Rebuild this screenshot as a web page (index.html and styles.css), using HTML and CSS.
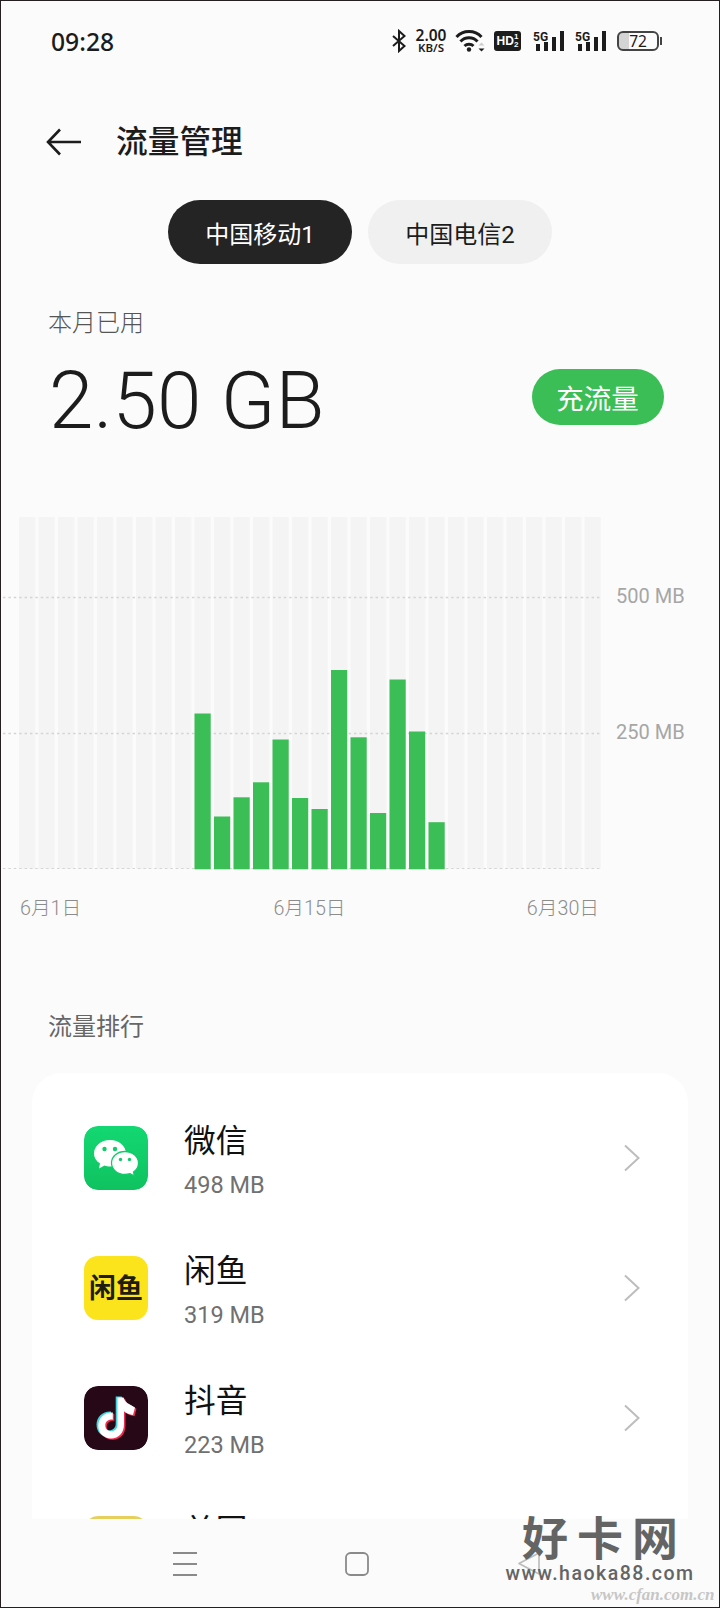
FILE: index.html
```html
<!DOCTYPE html>
<html lang="zh-CN">
<head>
<meta charset="utf-8">
<title>流量管理</title>
<link rel="stylesheet" href="styles.css">
</head>
<body>
<div class="screen">
  <header class="status">
    <span class="clock">09:28</span>
    <div class="status-icons">
      <svg class="bt" width="14" height="24" viewBox="0 0 14 24"><path d="M1 7 12.500 17 7 22V2l5.500 5L1 17" fill="none" stroke="#1c1c1c" stroke-width="2"/></svg>
      <div class="speed"><span>2.00</span><span class="unit">KB/S</span></div>
      <svg class="wifi" width="30" height="24" viewBox="0 0 30 24"><g fill="none" stroke="#1c1c1c" stroke-width="3"><path d="M1.500 8a17 17 0 0 1 25 0"/><path d="M5.500 12.500a11.500 11.500 0 0 1 17 0"/><path d="M9.500 17a6.500 6.500 0 0 1 9 0"/></g><circle cx="14" cy="20.500" r="2.200" fill="#1c1c1c"/><path d="M23.500 19.500h6l-3 3z" fill="#1c1c1c"/><path d="M23.500 16.500h6l-3-3z" fill="#ccc"/></svg>
      <div class="hd">HD<span class="hd-nums"><i>1</i><i>2</i></span></div>
      <svg class="sig" width="32" height="24" viewBox="0 0 32 24"><text x="0" y="11.500" class="g5">5G</text><path d="M3 15h4v7H3zM11 13h4v9h-4zM19 8h4v14h-4zM27 2h4v20h-4z" fill="#1c1c1c"/></svg>
      <svg class="sig" width="32" height="24" viewBox="0 0 32 24"><text x="0" y="11.500" class="g5">5G</text><path d="M3 15h4v7H3zM11 13h4v9h-4zM19 8h4v14h-4zM27 2h4v20h-4z" fill="#1c1c1c"/></svg>
      <div class="battery">72</div>
    </div>
  </header>

  <div class="titlebar">
    <svg width="36" height="28" viewBox="0 0 36 28"><path d="M14 1.500 2 14l12 12.500M2 14h33" fill="none" stroke="#1c1c1c" stroke-width="2.600"/></svg>
    <h1 class="title">流量管理</h1>
  </div>

  <nav class="tabs">
    <span class="tab active">中国移动1</span>
    <span class="tab">中国电信2</span>
  </nav>

  <section class="usage">
    <div>
      <div class="usage-label">本月已用</div>
      <div class="usage-value">2.50 GB</div>
    </div>
    <span class="buy">充流量</span>
  </section>

  <section class="chart">
    <svg class="plot" width="604" height="355" viewBox="0 0 604 355">
      <defs><pattern id="cols" x="18" y="0" width="19.500" height="355" patternUnits="userSpaceOnUse"><rect width="16.200" height="355" fill="#f4f4f4"/></pattern></defs>
      <rect x="18" width="583" height="352" fill="url(#cols)"/>
      <g stroke="#d4d4d4" stroke-dasharray="2.400 3" stroke-width="1.600"><path d="M2 80.500h598M2 216.500h598"/><path d="M2 351.500h598" stroke-width="1"/></g>
      <g fill="#3cbe56">
        <rect x="193.500" y="196.500" width="16.200" height="155.800"/>
        <rect x="213" y="299.500" width="16.200" height="52.800"/>
        <rect x="232.500" y="280.300" width="16.200" height="72"/>
        <rect x="252" y="265.300" width="16.200" height="87"/>
        <rect x="271.500" y="222.500" width="16.200" height="129.800"/>
        <rect x="291" y="281" width="16.200" height="71.300"/>
        <rect x="310.500" y="292" width="16.200" height="60.300"/>
        <rect x="330" y="153" width="16.200" height="199.300"/>
        <rect x="349.500" y="220.300" width="16.200" height="132"/>
        <rect x="369" y="296" width="16.200" height="56.300"/>
        <rect x="388.500" y="162.500" width="16.200" height="189.800"/>
        <rect x="408" y="214.500" width="16.200" height="137.800"/>
        <rect x="427.500" y="305.200" width="16.200" height="47.100"/>
      </g>
    </svg>
    <div class="y-axis"><span>500 MB</span><span>250 MB</span></div>
    <div class="x-axis"><span>6月1日</span><span>6月15日</span><span>6月30日</span></div>
  </section>

  <h2 class="rank-title">流量排行</h2>
  <section class="card">
    <div class="row">
      <svg class="icon" viewBox="0 0 64 64"><defs><linearGradient id="wg" x2="0" y2="1"><stop stop-color="#13d872"/><stop offset="1" stop-color="#0fc260"/></linearGradient></defs><rect width="64" height="64" rx="14" fill="url(#wg)"/><path d="M26 14c-9 0-16 6-16 13.500 0 4 2 7.500 6 10l-1 5 5.500-3c2 .7 3.500 1 5.500 1 9 0 16-5.500 16-13S35 14 26 14z" fill="#fff"/><path d="M41 25.500c-7.500 0-13.500 5-13.500 11.500s6 11.500 13.500 11.500c1.700 0 3.300-.3 5-.8l4.500 2.300-1-4c3-2 5-5 5-9 0-6.500-6-11.500-13.500-11.500z" fill="#fff" stroke="#10cc68" stroke-width="1.300"/><g fill="#10cc68"><circle cx="20.500" cy="23" r="2.200"/><circle cx="31" cy="23" r="2.200"/><circle cx="36.500" cy="33.500" r="1.700"/><circle cx="45.500" cy="33.500" r="1.700"/></g></svg>
      <div class="info"><span class="name">微信</span><span class="size">498 MB</span></div>
      <svg class="chev" width="16" height="28" viewBox="0 0 16 28"><path d="M1 1.500 14.500 14 1 26.500" /></svg>
    </div>
    <div class="row">
      <div class="icon fish"><span>闲鱼</span></div>
      <div class="info"><span class="name">闲鱼</span><span class="size">319 MB</span></div>
      <svg class="chev" width="16" height="28" viewBox="0 0 16 28"><path d="M1 1.500 14.500 14 1 26.500" /></svg>
    </div>
    <div class="row">
      <svg class="icon" viewBox="0 0 64 64"><rect width="64" height="64" rx="14" fill="#270817"/>
        <defs><path id="note" d="M32.500 11.500h6c.8 2.500 2 4.200 4 5.700l7.500 4.300-2 7.500c-3.500-.3-6.500-1.800-9-3.800v13.300c0 8.500-5.500 14-13 14-7.300 0-12.700-5.500-12.700-13 0-7.500 6.200-13.500 14.500-13v7.200c-4.500-.6-7.500 2-7.500 5.800 0 3.300 2.500 5.700 5.700 5.700 3.800 0 6.500-2.500 6.500-6.500z"/></defs>
        <use href="#note" x="-.8" y="-1" fill="#41d5de"/><use href="#note" x="2.500" y="1.200" fill="#ee2d52"/><use href="#note" x="1" fill="#fff"/></svg>
      <div class="info"><span class="name">抖音</span><span class="size">223 MB</span></div>
      <svg class="chev" width="16" height="28" viewBox="0 0 16 28"><path d="M1 1.500 14.500 14 1 26.500" /></svg>
    </div>
    <div class="row">
      <div class="icon meituan"></div>
      <div class="info"><span class="name">美团</span></div>
    </div>
  </section>

  <footer class="navbar">
    <svg width="24" height="26" viewBox="0 0 24 26"><path d="M0 2h24M0 13h24M0 24h24" fill="none" stroke="#8a8a8a" stroke-width="2"/></svg>
    <svg width="26" height="26" viewBox="0 0 26 26"><rect x="2" y="2" width="22" height="22" rx="4.500" fill="none" stroke="#8a8a8a" stroke-width="1.800"/></svg>
    <svg width="24" height="26" viewBox="0 0 24 26"><path d="M22 2v21L2 12.500z" fill="none" stroke="#bbb" stroke-width="1.600" stroke-linejoin="round"/></svg>
  </footer>

  <div class="mark"><span class="mark-name">好卡网</span><span class="mark-url">www.haoka88.com</span></div>
  <div class="mark2">www.cfan.com.cn</div>
</div>
</body>
</html>
```
FILE: styles.css
```css
* { box-sizing: border-box; }
body { margin: 0; }
.screen {
  position: relative;
  width: 720px;
  height: 1608px;
  overflow: hidden;
  border: 1px solid #231f20;
  background: #fbfbfb;
  color: #1c1c1c;
  font-family: Roboto, "Noto Sans CJK SC", sans-serif;
  display: flex;
  flex-direction: column;
}
.status { height: 82px; flex: none; padding: 0 57px 2px 50px; display: flex; align-items: center; justify-content: space-between; }
.clock { font: 500 24.700px "Noto Sans", sans-serif; }
.status-icons { display: flex; align-items: center; }
.speed { width: 34px; margin-left: 8px; display: flex; flex-direction: column; align-items: center; font: 600 15.500px/13px "Noto Sans", sans-serif; }
.unit { font-size: 11.500px; line-height: 12px; }
.wifi { margin-left: 7px; }
.hd { width: 27px; height: 20px; margin-left: 9px; border-radius: 3px; background: #1c1c1c; color: #fff; display: flex; align-items: center; justify-content: center; font: 700 12px "Liberation Sans", sans-serif; }
.hd-nums { display: flex; flex-direction: column; font-size: 8px; line-height: 8px; }
.hd-nums i { font-style: normal; }
.sig { margin-left: 12px; }
.sig + .sig { margin-left: 10px; }
.g5 { font: 700 12px Roboto, sans-serif; fill: #1c1c1c; }
.battery { position: relative; width: 42px; height: 20px; margin: 0 3px 0 10px; border: 2px solid #444; border-radius: 6px; background: linear-gradient(90deg, #d4d4d4 10px, #fbfbfb 10px); display: flex; align-items: center; justify-content: center; font: 400 15.500px "Noto Sans", sans-serif; }
.battery::after { content: ""; position: absolute; right: -5px; top: 4px; width: 2px; height: 8px; background: #444; }

.titlebar { height: 117px; flex: none; padding: 0 45px; display: flex; align-items: center; gap: 34px; }
.title { margin: 3px 0 0; font-size: 31.700px; line-height: 40px; font-weight: 500; }

.tabs { display: flex; justify-content: center; gap: 16px; flex: none; }
.tab { width: 184px; height: 64px; border-radius: 32px; background: #f0f0f0; display: flex; align-items: center; justify-content: center; font-size: 24px; }
.tab.active { background: #242424; color: #fff; }

.usage { height: 253px; flex: none; padding: 43px 55px 0 47px; display: flex; justify-content: space-between; }
.usage-label { font-size: 24px; line-height: 32px; color: #555; font-weight: 300; }
.usage-value { margin: 15px 0 0 1px; font-size: 80px; line-height: 94px; font-weight: 300; }
.buy { width: 132px; height: 56px; margin-top: 62px; border-radius: 28px; background: #3cbe56; color: #fff; font-size: 27.500px; display: flex; align-items: center; justify-content: center; padding-right: 1px; }

.chart { display: grid; grid-template-columns: 604px 1fr; grid-template-rows: 355px 1fr; height: 488px; flex: none; color: #a6a6a6; font-size: 20px; }
.y-axis { padding: 65px 0 0 11px; display: flex; flex-direction: column; gap: 108px; line-height: 28px; }
.x-axis { padding: 22px 6px 0 19px; display: grid; grid-template-columns: 1fr auto 1fr; line-height: 30px; font-size: 19.700px; font-weight: 300; color: #8c8c8c; }
.x-axis span:last-child { text-align: right; }

.rank-title { margin: 6px 0 0 47px; font-size: 24px; line-height: 32px; font-weight: 400; color: #666; flex: none; }
.card { width: 656px; height: 446px; margin: 30px 0 0 31px; border-radius: 30px 30px 0 0; background: #fff; overflow: hidden; flex: none; padding: 20px 48px 0 52px; }
.row { height: 130px; display: flex; align-items: center; }
.icon { width: 64px; height: 64px; flex: none; border-radius: 14px; }
.info { margin-left: 36px; flex: 1; height: 80px; padding-top: 2px; display: flex; flex-direction: column; }
.name { font-size: 31.700px; line-height: 44px; color: #111; }
.size { font-size: 23.500px; line-height: 28px; color: #707070; margin-top: 7px; }
.chev path { fill: none; stroke: #bdbdbd; stroke-width: 2; }
.fish { background: #fbe41b; display: flex; align-items: center; justify-content: center; padding-bottom: 3px; font-weight: 700; font-size: 27px; color: #201c10; }
.meituan { background: #e6cf5c; }

.navbar { height: 86px; flex: none; padding: 3px 178px 0 172px; display: flex; align-items: center; justify-content: space-between; }
.mark { position: absolute; left: 500px; top: 1506px; width: 198px; display: flex; flex-direction: column; align-items: center; color: #646464; }
.mark-name { font: 700 46px/56px "Noto Sans CJK SC", sans-serif; letter-spacing: 9px; margin-right: -9px; }
.mark-url { font: 500 19.500px/22px Roboto, sans-serif; letter-spacing: 1.500px; }
.mark2 { position: absolute; left: 590px; top: 1584px; font: italic 700 17px/20px "Liberation Serif", serif; color: #c6c6c6; }
```
